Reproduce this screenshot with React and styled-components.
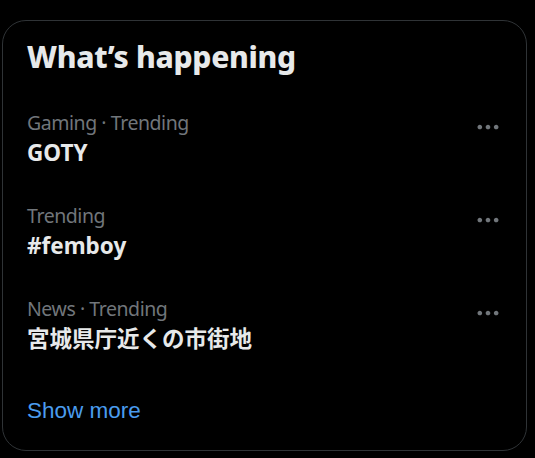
import React from "react";
import styled, { createGlobalStyle } from "styled-components";

const Global = createGlobalStyle`
  html, body { margin: 0; padding: 0; background: #000; }
  body { font-family: "Noto Sans", "Noto Sans CJK JP", sans-serif; }
`;

const Page = styled.div`
  padding: 20px 0 0 2px;
  background: #000;
  min-height: 458px;
  box-sizing: border-box;
`;

const Card = styled.section`
  width: 525px;
  box-sizing: border-box;
  border: 1px solid #2f3336;
  border-radius: 24px;
  background: #000;
  display: flex;
  flex-direction: column;
`;

const Header = styled.h2`
  margin: 0;
  padding: 18px 24px;
  font-size: 30px;
  line-height: 36px;
  font-weight: 800;
  letter-spacing: -0.3px;
  color: #e7e9ea;
`;

const Item = styled.div`
  display: flex;
  align-items: flex-start;
  padding: 18px 24px;
`;

const Body = styled.div`
  flex: 1;
  display: flex;
  flex-direction: column;
  gap: 3px;
`;

const Meta = styled.div`
  font-size: 19.5px;
  line-height: 24px;
  letter-spacing: -0.45px;
  color: #71767b;
`;

const Name = styled.div`
  font-size: 22.5px;
  line-height: 30px;
  font-weight: 700;
  color: #e7e9ea;
  font-family: "Noto Sans", "Noto Sans CJK JP", sans-serif;
`;

const More = styled.svg`
  width: 28px;
  height: 28px;
  margin-top: 2px;
  fill: #71767b;
  flex: none;
`;

const ShowMore = styled.div`
  padding: 24px;
  font-family: "Liberation Sans", Arial, sans-serif;
  font-size: 22.5px;
  line-height: 30px;
  color: #4a9cee;
`;

const trends = [
  { meta: "Gaming · Trending", name: "GOTY" },
  { meta: "Trending", name: "#femboy" },
  { meta: "News · Trending", name: "宮城県庁近くの市街地" },
];

const Dots = () => (
  <More viewBox="0 0 24 24" aria-hidden="true">
    <path d="M3 12c0-1.1.9-2 2-2s2 .9 2 2-.9 2-2 2-2-.9-2-2zm9 2c1.1 0 2-.9 2-2s-.9-2-2-2-2 .9-2 2 .9 2 2 2zm7 0c1.1 0 2-.9 2-2s-.9-2-2-2-2 .9-2 2 .9 2 2 2z" />
  </More>
);

export default function App() {
  return (
    <Page>
      <Global />
      <Card>
        <Header>What’s happening</Header>
        {trends.map((t) => (
          <Item key={t.name}>
            <Body>
              <Meta>{t.meta}</Meta>
              <Name>{t.name}</Name>
            </Body>
            <Dots />
          </Item>
        ))}
        <ShowMore>Show more</ShowMore>
      </Card>
    </Page>
  );
}
